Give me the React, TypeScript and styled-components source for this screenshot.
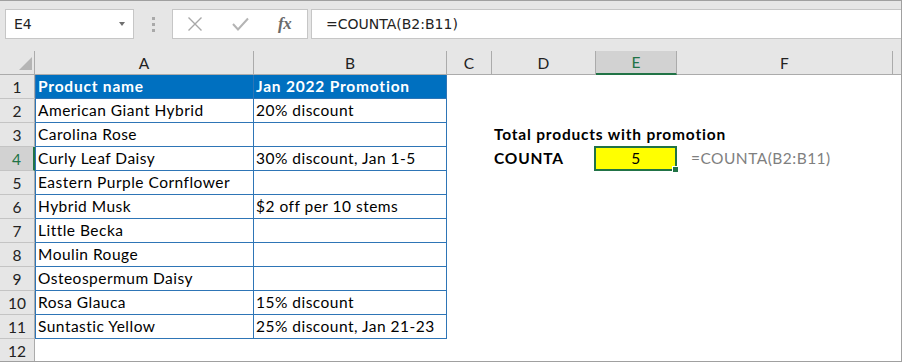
import React from 'react';
import styled, { createGlobalStyle, css } from 'styled-components';

const GlobalStyle = createGlobalStyle`
  html, body {
    margin: 0;
    padding: 0;
    background: #ffffff;
  }
  * {
    box-sizing: border-box;
  }
`;

const BLUE_LINE = '#2e75b6';
const BLUE_FILL = '#0070c0';
const GREEN = '#217346';
const CELL_FONT = `"Lato", "Liberation Sans", sans-serif`;
const UI_FONT = `"DejaVu Sans", "Noto Sans", sans-serif`;

const COLUMNS = [
  { letter: 'A', width: 219 },
  { letter: 'B', width: 193 },
  { letter: 'C', width: 45 },
  { letter: 'D', width: 104 },
  { letter: 'E', width: 81 },
  { letter: 'F', width: 216 },
];

const PRODUCTS: [string, string][] = [
  ['American Giant Hybrid', '20% discount'],
  ['Carolina Rose', ''],
  ['Curly Leaf Daisy', '30% discount, Jan 1-5'],
  ['Eastern Purple Cornflower', ''],
  ['Hybrid Musk', '$2 off per 10 stems'],
  ['Little Becka', ''],
  ['Moulin Rouge', ''],
  ['Osteospermum Daisy', ''],
  ['Rosa Glauca', '15% discount'],
  ['Suntastic Yellow', '25% discount, Jan 21-23'],
];

const Frame = styled.div`
  width: 902px;
  height: 362px;
  background: #e6e6e6;
  border: 1px solid #a0a0a0;
  border-left: none;
  overflow: hidden;
  display: flex;
  flex-direction: column;
`;

/* ---------- formula bar ---------- */

const Toolbar = styled.div`
  display: flex;
  height: 30px;
  margin: 8px 0 12px 5px;
  flex-shrink: 0;
`;

const NameBox = styled.div`
  width: 129px;
  background: #ffffff;
  border: 1px solid #c6c6c6;
  display: flex;
  align-items: center;
  justify-content: space-between;
  padding: 0 8px;
  font-family: ${UI_FONT};
  font-size: 14px;
  color: #222222;
`;

const DropArrow = styled.span`
  width: 0;
  height: 0;
  border-left: 3.5px solid transparent;
  border-right: 3.5px solid transparent;
  border-top: 4px solid #6f6f6f;
`;

const Grip = styled.div`
  width: 38px;
  display: flex;
  flex-direction: column;
  align-items: center;
  justify-content: center;
  gap: 3px;
`;

const GripDot = styled.span`
  width: 3px;
  height: 3px;
  background: #a9a9a9;
`;

const ButtonBox = styled.div`
  width: 136px;
  background: #ffffff;
  border: 1px solid #c6c6c6;
  display: flex;
`;

const BarButton = styled.div`
  flex: 1;
  display: flex;
  align-items: center;
  justify-content: center;
`;

const FxLabel = styled.span`
  font-family: "Liberation Serif", "DejaVu Serif", serif;
  font-style: italic;
  font-weight: bold;
  font-size: 17px;
  color: #6a6a6a;
  letter-spacing: -0.5px;
`;

const FormulaInput = styled.div`
  flex: 1;
  margin-left: 3px;
  background: #ffffff;
  border: 1px solid #c6c6c6;
  border-right: none;
  display: flex;
  align-items: center;
  padding-left: 14px;
  font-family: ${UI_FONT};
  font-size: 14px;
  color: #222222;
`;

/* ---------- grid ---------- */

const HeaderRow = styled.div`
  display: flex;
  height: 24px;
  flex-shrink: 0;
`;

const Corner = styled.div`
  width: 35px;
  border-right: 1px solid #ababab;
  border-bottom: 1px solid #ababab;
  display: flex;
  align-items: flex-end;
  justify-content: flex-end;
  padding: 0 2px 4px 0;
`;

const ColHead = styled.div<{ $w: number; $active?: boolean }>`
  width: ${(p) => p.$w}px;
  border-right: 1px solid #ababab;
  border-bottom: 1px solid #ababab;
  display: flex;
  align-items: center;
  justify-content: center;
  font-family: ${CELL_FONT};
  font-size: 15.5px;
  color: #222222;
  ${(p) =>
    p.$active &&
    css`
      background: #d2d2d2;
      color: ${GREEN};
      border-bottom: 2px solid ${GREEN};
    `}
`;

const HeadFiller = styled.div`
  flex: 1;
  border-bottom: 1px solid #ababab;
`;

const Sheet = styled.div`
  flex: 1;
  background: #ffffff;
  display: flex;
  flex-direction: column;
`;

const Row = styled.div`
  display: flex;
  height: 24px;
  flex-shrink: 0;
`;

const RowHead = styled.div<{ $active?: boolean }>`
  width: 35px;
  background: #e6e6e6;
  border-right: 1px solid #ababab;
  border-bottom: 1px solid #c4c4c4;
  display: flex;
  align-items: center;
  justify-content: center;
  font-family: ${CELL_FONT};
  font-size: 15.5px;
  color: #222222;
  ${(p) =>
    p.$active &&
    css`
      background: #d2d2d2;
      color: ${GREEN};
      border-right: 2px solid ${GREEN};
    `}
`;

const Cell = styled.div<{
  $w: number;
  $table?: boolean;
  $edge?: boolean;
  $head?: boolean;
  $bold?: boolean;
  $center?: boolean;
  $fill?: string;
  $tone?: string;
  $indent?: number;
}>`
  position: relative;
  width: ${(p) => p.$w}px;
  flex-shrink: 0;
  border-bottom: 1px solid ${(p) => (p.$table ? BLUE_LINE : 'transparent')};
  border-right: 1px solid ${(p) => (p.$table ? BLUE_LINE : 'transparent')};
  border-left: ${(p) => (p.$edge ? `1px solid ${p.$table ? BLUE_LINE : 'transparent'}` : 'none')};
  background: ${(p) => (p.$head ? BLUE_FILL : p.$fill || 'transparent')};
  color: ${(p) => (p.$head ? '#ffffff' : p.$tone || '#000000')};
  font-family: ${CELL_FONT};
  font-size: 15.5px;
  font-weight: ${(p) => (p.$head || p.$bold ? 700 : 400)};
  letter-spacing: ${(p) => (p.$head || p.$bold ? 0.8 : 0.48)}px;
  line-height: 23px;
  padding-left: ${(p) => p.$indent ?? 2}px;
  text-align: ${(p) => (p.$center ? 'center' : 'left')};
  white-space: nowrap;
  overflow: visible;
`;

const Selection = styled.div`
  position: absolute;
  top: -1px;
  left: -2px;
  right: -1px;
  bottom: -1px;
  border: 2px solid ${GREEN};
  pointer-events: none;
  z-index: 2;
`;

const FillHandle = styled.span`
  position: absolute;
  right: -4px;
  bottom: -4px;
  width: 7px;
  height: 7px;
  background: ${GREEN};
  border: 1px solid #ffffff;
`;

const CloseIcon = () => (
  <svg width="16" height="16" viewBox="0 0 16 16">
    <path d="M1.5 1.5 L14.5 14.5 M14.5 1.5 L1.5 14.5" stroke="#a8a8a8" strokeWidth="1.4" fill="none" />
  </svg>
);

const CheckIcon = () => (
  <svg width="17" height="14" viewBox="0 0 17 14">
    <path d="M1 7 L6 12.5 L16 1.5" stroke="#b4b4b4" strokeWidth="2" fill="none" />
  </svg>
);

const CornerTriangle = () => (
  <svg width="13" height="13" viewBox="0 0 13 13">
    <polygon points="13,0 13,13 0,13" fill="#b5b5b5" />
  </svg>
);

type CellSpec = {
  text?: string;
  bold?: boolean;
  center?: boolean;
  fill?: string;
  tone?: string;
  indent?: number;
  selected?: boolean;
};

const extras: Record<number, Record<string, CellSpec>> = {
  3: { D: { text: 'Total products with promotion', bold: true } },
  4: {
    D: { text: 'COUNTA', bold: true },
    E: { text: '5', center: true, fill: '#ffff00', indent: 0, selected: true },
    F: { text: '=COUNTA(B2:B11)', tone: '#7f7f7f', indent: 14 },
  },
};

const App: React.FC = () => {
  const rows = Array.from({ length: 12 }, (_, i) => i + 1);

  return (
    <>
      <GlobalStyle />
      <Frame>
        <Toolbar>
          <NameBox>
            <span>E4</span>
            <DropArrow />
          </NameBox>
          <Grip>
            <GripDot />
            <GripDot />
            <GripDot />
          </Grip>
          <ButtonBox>
            <BarButton>
              <CloseIcon />
            </BarButton>
            <BarButton>
              <CheckIcon />
            </BarButton>
            <BarButton>
              <FxLabel>fx</FxLabel>
            </BarButton>
          </ButtonBox>
          <FormulaInput>=COUNTA(B2:B11)</FormulaInput>
        </Toolbar>

        <HeaderRow>
          <Corner>
            <CornerTriangle />
          </Corner>
          {COLUMNS.map((c) => (
            <ColHead key={c.letter} $w={c.width} $active={c.letter === 'E'}>
              {c.letter}
            </ColHead>
          ))}
          <HeadFiller />
        </HeaderRow>

        <Sheet>
          {rows.map((r) => {
            const inTable = r <= 11;
            const product = r >= 2 && r <= 11 ? PRODUCTS[r - 2] : null;
            const a = r === 1 ? 'Product name' : product ? product[0] : '';
            const b = r === 1 ? 'Jan 2022 Promotion' : product ? product[1] : '';
            const more = extras[r] || {};
            return (
              <Row key={r}>
                <RowHead $active={r === 4}>{r}</RowHead>
                <Cell $w={COLUMNS[0].width} $table={inTable} $edge $head={r === 1}>
                  {a}
                </Cell>
                <Cell $w={COLUMNS[1].width} $table={inTable} $head={r === 1}>
                  {b}
                </Cell>
                {COLUMNS.slice(2).map((c) => {
                  const spec = more[c.letter];
                  return (
                    <Cell
                      key={c.letter}
                      $w={c.width}
                      $bold={spec?.bold}
                      $center={spec?.center}
                      $fill={spec?.fill}
                      $tone={spec?.tone}
                      $indent={spec?.indent}
                    >
                      {spec?.text}
                      {spec?.selected && (
                        <Selection>
                          <FillHandle />
                        </Selection>
                      )}
                    </Cell>
                  );
                })}
              </Row>
            );
          })}
        </Sheet>
      </Frame>
    </>
  );
};

export default App;
